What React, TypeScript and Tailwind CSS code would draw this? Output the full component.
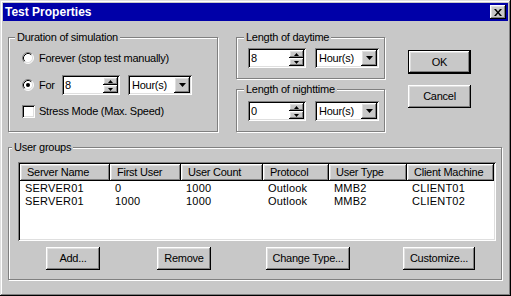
import type { ReactNode } from 'react';

const sunken =
    'shadow-[inset_1px_1px_0_#808080,inset_-1px_-1px_0_#fff,inset_2px_2px_0_#000,inset_-2px_-2px_0_#dfdfdf]';
const raised =
    'shadow-[inset_-1px_-1px_0_#000,inset_1px_1px_0_#fff,inset_-2px_-2px_0_#808080,inset_2px_2px_0_#dfdfdf]';

const columns = [
    { title: 'Server Name', width: 'w-[90px]' },
    { title: 'First User', width: 'w-[71px]' },
    { title: 'User Count', width: 'w-[82px]' },
    { title: 'Protocol', width: 'w-[66px]' },
    { title: 'User Type', width: 'w-[78px]' },
    { title: 'Client Machine', width: 'w-[87px]' }
];

const rows = [
    ['SERVER01', '0', '1000', 'Outlook', 'MMB2', 'CLIENT01'],
    ['SERVER01', '1000', '1000', 'Outlook', 'MMB2', 'CLIENT02']
];

function Group({ label, labelLeft, className, children }: { label: string; labelLeft: string; className: string; children?: ReactNode }) {
    return (
        <div className={`relative border border-[#808080] shadow-[1px_1px_0_#fff,inset_1px_1px_0_#fff] ${className}`}>
            <span className={`absolute top-[-8px] ${labelLeft} bg-[#c8c8c8] px-[2px] leading-[14px]`}>{label}</span>
            {children}
        </div>
    );
}

function Radio({ checked }: { checked?: boolean }) {
    return (
        <svg width="12" height="12" viewBox="0 0 12 12" className="shrink-0">
            <circle cx="6" cy="6" r="5" fill="#fff" />
            <path d="M2.11 9.89 A5.5 5.5 0 0 1 9.89 2.11" stroke="#808080" fill="none" />
            <path d="M9.89 2.11 A5.5 5.5 0 0 1 2.11 9.89" stroke="#fff" fill="none" />
            <path d="M2.82 9.18 A4.5 4.5 0 0 1 9.18 2.82" stroke="#000" fill="none" />
            <path d="M9.18 2.82 A4.5 4.5 0 0 1 2.82 9.18" stroke="#dfdfdf" fill="none" />
            {checked && <circle cx="6" cy="6" r="2" fill="#000" />}
        </svg>
    );
}

function SpinField({ value }: { value: string }) {
    return (
        <div className={`flex h-[20px] w-[58px] bg-white p-[2px] ${sunken}`}>
            <div className="flex-1 pl-[1px] leading-[16px]">{value}</div>
            <div className="flex w-[15px] flex-col">
                <div className={`flex flex-1 items-center justify-center bg-[#c8c8c8] ${raised}`}>
                    <svg width="5" height="3" viewBox="0 0 5 3"><path d="M2.5 0 L5 3 L0 3 Z" fill="#000" /></svg>
                </div>
                <div className={`flex flex-1 items-center justify-center bg-[#c8c8c8] ${raised}`}>
                    <svg width="5" height="3" viewBox="0 0 5 3"><path d="M0 0 L5 0 L2.5 3 Z" fill="#000" /></svg>
                </div>
            </div>
        </div>
    );
}

function Dropdown() {
    return (
        <div className={`flex h-[20px] w-[64px] bg-white p-[2px] ${sunken}`}>
            <div className="flex-1 pl-[2px] leading-[16px]">Hour(s)</div>
            <div className={`flex w-[16px] items-center justify-center bg-[#c8c8c8] ${raised}`}>
                <svg width="7" height="4" viewBox="0 0 7 4"><path d="M0 0 L7 0 L3.5 4 Z" fill="#000" /></svg>
            </div>
        </div>
    );
}

function Button({ label, className }: { label: string; className: string }) {
    return (
        <div className={`flex h-[23px] items-center justify-center bg-[#c8c8c8] ${raised} ${className}`}>
            {label}
        </div>
    );
}

export default function App() {
    return (
        <div className="flex h-[296px] w-[511px] flex-col bg-[#c8c8c8] p-[3px] font-['Liberation_Sans',Arial,sans-serif] text-[11px] tracking-[-0.25px] text-black shadow-[inset_-1px_-1px_0_#000,inset_1px_1px_0_#dfdfdf,inset_-2px_-2px_0_#808080,inset_2px_2px_0_#fff]">
            <div className="flex h-[18px] items-center justify-between bg-[#0000a8] pl-[2px] pr-[2px]">
                <span className="text-[12px] font-bold tracking-normal text-white">Test Properties</span>
                <div className={`flex h-[14px] w-[16px] items-center justify-center bg-[#c8c8c8] ${raised}`}>
                    <svg width="8" height="7" viewBox="0 0 8 7">
                        <path d="M0 0 L2 0 L4 2.5 L6 0 L8 0 L5 3.5 L8 7 L6 7 L4 4.5 L2 7 L0 7 L3 3.5 Z" fill="#000" />
                    </svg>
                </div>
            </div>

            <div className="flex flex-col pl-[5px] pt-[16px]">
                <div className="flex">
                    <Group label="Duration of simulation" labelLeft="left-[6px]" className="h-[95px] w-[210px]">
                        <div className="ml-[13px] mt-[13px] flex h-[14px] items-center">
                            <Radio />
                            <span className="ml-[5px]">Forever (stop test manually)</span>
                        </div>
                        <div className="ml-[13px] mt-[10px] flex h-[20px] items-center">
                            <Radio checked />
                            <span className="ml-[5px] w-[23px]">For</span>
                            <SpinField value="8" />
                            <div className="ml-[8px]"><Dropdown /></div>
                        </div>
                        <div className="ml-[13px] mt-[10px] flex h-[13px] items-center">
                            <div className={`h-[13px] w-[13px] bg-white ${sunken}`} />
                            <span className="ml-[4px]">Stress Mode (Max. Speed)</span>
                        </div>
                    </Group>

                    <div className="ml-[18px] flex flex-col">
                        <Group label="Length of daytime" labelLeft="left-[7px]" className="h-[42px] w-[149px]">
                            <div className="ml-[11px] mt-[10px] flex gap-[9px]">
                                <SpinField value="8" />
                                <Dropdown />
                            </div>
                        </Group>
                        <Group label="Length of nighttime" labelLeft="left-[7px]" className="mt-[10px] h-[43px] w-[149px]">
                            <div className="ml-[11px] mt-[11px] flex gap-[9px]">
                                <SpinField value="0" />
                                <Dropdown />
                            </div>
                        </Group>
                    </div>

                    <div className="ml-[23px] flex flex-col">
                        <div className="mt-[13px] h-[24px] w-[63px] border border-black">
                            <Button label="OK" className="h-full w-full" />
                        </div>
                        <Button label="Cancel" className="mt-[11px] w-[63px]" />
                    </div>
                </div>

                <Group label="User groups" labelLeft="left-[3px]" className="mt-[15px] h-[133px] w-[494px]">
                    <div className={`ml-[9px] mt-[14px] h-[79px] w-[478px] bg-white p-[2px] ${sunken}`}>
                        <div className="flex h-[17px]">
                            {columns.map((col) => (
                                <div key={col.title} className={`flex items-center bg-[#c8c8c8] pl-[7px] ${raised} ${col.width}`}>
                                    {col.title}
                                </div>
                            ))}
                        </div>
                        {rows.map((row, i) => (
                            <div key={i} className={`flex h-[13px] leading-[13px] tracking-[0.2px] ${i === 0 ? 'mt-[1px]' : ''}`}>
                                {row.map((cell, j) => (
                                    <div key={j} className={`pl-[5px] ${columns[j].width}`}>{cell}</div>
                                ))}
                            </div>
                        ))}
                    </div>
                    <div className="mt-[6px] flex">
                        <Button label="Add..." className="ml-[37px] w-[54px]" />
                        <Button label="Remove" className="ml-[57px] w-[54px]" />
                        <Button label="Change Type..." className="ml-[55px] w-[84px]" />
                        <Button label="Customize..." className="ml-[53px] w-[72px]" />
                    </div>
                </Group>
            </div>
        </div>
    );
}
